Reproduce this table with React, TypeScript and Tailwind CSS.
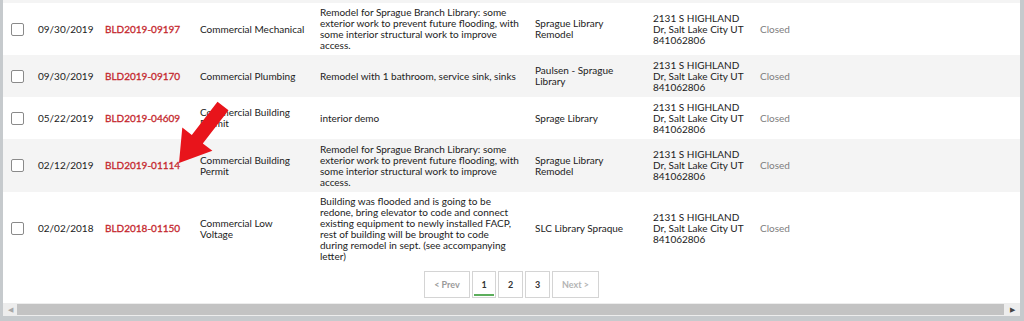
import React from "react";

type Row = {
  date: string;
  permit: string;
  type: string[];
  desc: string[];
  project: string[];
  h: string;
  bg: string;
};

const rows: Row[] = [
  {
    date: "09/30/2019",
    permit: "BLD2019-09197",
    type: ["Commercial Mechanical"],
    desc: [
      "Remodel for Sprague Branch Library: some",
      "exterior work to prevent future flooding, with",
      "some interior structural work to improve",
      "access.",
    ],
    project: ["Sprague Library", "Remodel"],
    h: "h-[52px]",
    bg: "bg-white",
  },
  {
    date: "09/30/2019",
    permit: "BLD2019-09170",
    type: ["Commercial Plumbing"],
    desc: ["Remodel with 1 bathroom, service sink, sinks"],
    project: ["Paulsen - Sprague", "Library"],
    h: "h-[42px]",
    bg: "bg-[#f4f4f4]",
  },
  {
    date: "05/22/2019",
    permit: "BLD2019-04609",
    type: ["Commercial Building", "Permit"],
    desc: ["interior demo"],
    project: ["Sprage Library"],
    h: "h-[42px]",
    bg: "bg-white",
  },
  {
    date: "02/12/2019",
    permit: "BLD2019-01114",
    type: ["Commercial Building", "Permit"],
    desc: [
      "Remodel for Sprague Branch Library: some",
      "exterior work to prevent future flooding, with",
      "some interior structural work to improve",
      "access.",
    ],
    project: ["Sprague Library", "Remodel"],
    h: "h-[53px]",
    bg: "bg-[#f4f4f4]",
  },
  {
    date: "02/02/2018",
    permit: "BLD2018-01150",
    type: ["Commercial Low", "Voltage"],
    desc: [
      "Building was flooded and is going to be",
      "redone, bring elevator to code and connect",
      "existing equipment to newly installed FACP,",
      "rest of building will be brought to code",
      "during remodel in sept. (see accompanying",
      "letter)",
    ],
    project: ["SLC Library Spraque"],
    h: "h-[73px]",
    bg: "bg-white",
  },
];

function Lines({ lines }: { lines: string[] }) {
  return (
    <div className="flex flex-col">
      {lines.map((l, i) => (
        <span key={i} className="whitespace-nowrap">
          {l}
        </span>
      ))}
    </div>
  );
}

function Arrow() {
  return (
    <svg
      className="absolute left-0 top-0 pointer-events-none"
      width="260"
      height="200"
      viewBox="0 0 260 200"
    >
      <polygon
        fill="#e8141b"
        points="176,163 209.4,150.8 199.8,143.5 225.5,110.3 214.5,101.7 188.8,134.9 179.3,127.6"
      />
    </svg>
  );
}

export default function App() {
  return (
    <div
      className="w-[1024px] h-[321px] overflow-hidden bg-[#c6cacd] text-[10px] leading-[11px] text-[#222]"
      style={{ fontFamily: "Lato, 'Noto Sans', 'Liberation Sans', sans-serif" }}
    >
      <div className="ml-[3px] mr-[4px] h-[316px] bg-white relative flex flex-col">
        <div className="h-[3px] bg-[#f4f4f4]" />
        {rows.map((r, i) => (
          <div
            key={i}
            className={`grid grid-cols-[35px_67px_95px_120px_215px_118px_107px_1fr] items-center ${r.h} ${r.bg}`}
          >
            <div className="pl-[8px] flex items-center">
              <div className="w-[13px] h-[13px] border border-[#8a8a8a] rounded-[2px] bg-white" />
            </div>
            <div>{r.date}</div>
            <div className="text-[#c5282e] [-webkit-text-stroke:0.3px_#c5282e]">{r.permit}</div>
            <Lines lines={r.type} />
            <Lines lines={r.desc} />
            <Lines lines={r.project} />
            <Lines
              lines={["2131 S HIGHLAND", "Dr, Salt Lake City UT", "841062806"]}
            />
            <div className="text-[#7e7e7e]">Closed</div>
          </div>
        ))}
        <div className="flex justify-center pt-[6px] h-[38px] gap-[2px] text-[9px] font-bold">
          <div className="w-[46px] h-[27px] border border-[#d4d4d4] flex items-center justify-center text-[#9a9a9a]">
            &lt; Prev
          </div>
          <div className="relative w-[24px] h-[27px] border border-[#d4d4d4] flex items-center justify-center text-[#333]">
            1
            <div className="absolute left-[1px] right-[1px] bottom-[1px] h-[2px] bg-[#5cae5c]" />
          </div>
          <div className="w-[25px] h-[27px] border border-[#d4d4d4] flex items-center justify-center text-[#333]">
            2
          </div>
          <div className="w-[25px] h-[27px] border border-[#d4d4d4] flex items-center justify-center text-[#333]">
            3
          </div>
          <div className="w-[47px] h-[27px] border border-[#d4d4d4] flex items-center justify-center text-[#b4b4b4]">
            Next &gt;
          </div>
        </div>
        <div className="h-[13px] bg-[#ededed] flex items-center">
          <div className="w-[14px] h-full flex items-center justify-center text-[#a8a8a8] text-[7px]">
            ◀
          </div>
          <div className="flex-1 h-[11px] bg-[#c3c3c3]" />
          <div className="w-[16px] h-full flex items-center justify-center text-[#444] text-[7px]">
            ▶
          </div>
        </div>
        <Arrow />
      </div>
    </div>
  );
}
